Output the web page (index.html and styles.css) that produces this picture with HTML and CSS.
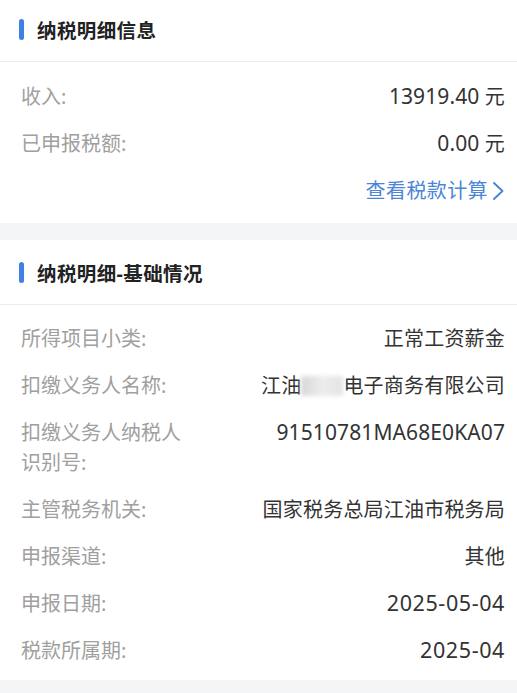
FILE: index.html
```html
<!DOCTYPE html>
<html lang="zh-CN">
<head>
<meta charset="utf-8">
<link rel="stylesheet" href="styles.css">
</head>
<body>
<div class="page">
  <section class="card card-first">
    <div class="card-head"><span class="bar"></span><h2>纳税明细信息</h2></div>
    <div class="card-body">
      <div class="row"><div class="label">收入:</div><div class="value"><span class="num">13919.40</span> 元</div></div>
      <div class="row"><div class="label">已申报税额:</div><div class="value"><span class="num">0.00</span> 元</div></div>
      <div class="row link-row">
        <a class="link">查看税款计算<svg class="chev" width="14" height="22" viewBox="0 0 14 22"><path d="M3 3 L11.5 11 L3 19" fill="none" stroke="currentColor" stroke-width="1.9" stroke-linecap="round" stroke-linejoin="round"/></svg></a>
      </div>
    </div>
  </section>
  <section class="card">
    <div class="card-head"><span class="bar"></span><h2>纳税明细-基础情况</h2></div>
    <div class="card-body">
      <div class="row"><div class="label">所得项目小类:</div><div class="value">正常工资薪金</div></div>
      <div class="row"><div class="label">扣缴义务人名称:</div><div class="value">江油<span class="redact"></span>电子商务有限公司</div></div>
      <div class="row"><div class="label">扣缴义务人纳税人识别号:</div><div class="value"><span class="num">91510781MA68E0KA07</span></div></div>
      <div class="row"><div class="label">主管税务机关:</div><div class="value">国家税务总局江油市税务局</div></div>
      <div class="row"><div class="label">申报渠道:</div><div class="value">其他</div></div>
      <div class="row"><div class="label">申报日期:</div><div class="value"><span class="num wide">2025-05-04</span></div></div>
      <div class="row"><div class="label">税款所属期:</div><div class="value"><span class="num wide">2025-04</span></div></div>
    </div>
  </section>
</div>
</body>
</html>
```
FILE: styles.css
```css
html, body {
  margin: 0;
  padding: 0;
  background: #f4f5f7;
}
body {
  font-family: "Noto Sans", "Noto Sans CJK SC", sans-serif;
  overflow: hidden;
}
.page {
  display: flex;
  flex-direction: column;
  gap: 17px;
  margin-top: -3px;
}
.card {
  background: #fff;
}
.card-head {
  height: 65px;
  display: flex;
  align-items: center;
  gap: 13px;
  padding-left: 19px;
  border-bottom: 1px solid #ececec;
  box-sizing: border-box;
}
.bar {
  width: 5px;
  height: 21px;
  border-radius: 3px;
  background: #3f80e3;
}
.card-head h2 {
  margin: 0;
  font-size: 19.5px;
  font-weight: 700;
  color: #222;
  letter-spacing: 0.4px;
}
.card-body {
  padding: 10px 12px 6px 21px;
}
.card-first .card-body {
  padding-top: 11px;
  padding-bottom: 9px;
}
.row {
  display: flex;
  justify-content: space-between;
  align-items: flex-start;
  padding: 8.5px 0;
  line-height: 30px;
  height: auto;
  font-size: 20px;
}
.label {
  width: 168px;
  flex: none;
  color: #a0a0a0;
}
.value {
  color: #333;
  text-align: right;
  letter-spacing: 0.2px;
  line-height: 30px;
  max-height: 30px;
}
.num {
  font-size: 21px;
  line-height: 16px;
  letter-spacing: 0.1px;
}
.num.wide {
  font-size: 21.5px;
  letter-spacing: 0.6px;
}
.link-row {
  justify-content: flex-end;
  height: 30px;
}
.link {
  display: flex;
  align-items: center;
  gap: 3px;
  color: #4a85d6;
  font-size: 20px;
  letter-spacing: 0.4px;
}
.chev {
  color: #4a85d6;
}
.redact {
  display: inline-block;
  width: 42px;
  height: 20px;
  vertical-align: -3px;
  background: linear-gradient(90deg, #d8d8d8, #ececec 50%, #e4e4e4);
  filter: blur(2px);
}
```
